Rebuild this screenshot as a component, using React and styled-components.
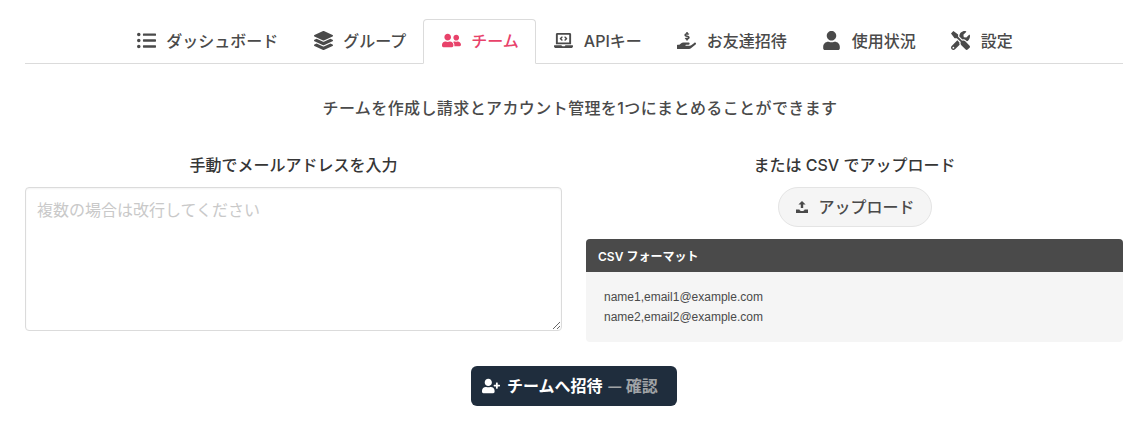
import React from "react";
import styled, { createGlobalStyle } from "styled-components";
import {
  FaListUl,
  FaLayerGroup,
  FaUserFriends,
  FaLaptopCode,
  FaHandHoldingUsd,
  FaUser,
  FaTools,
  FaUserPlus,
} from "react-icons/fa";

const mediumFont = `"Inter", "Noto Sans CJK JP", sans-serif`;

const GlobalStyle = createGlobalStyle`
  html, body {
    margin: 0;
    padding: 0;
    background: #fff;
    font-family: "Liberation Sans", "Noto Sans CJK JP", sans-serif;
    color: #4a4a4a;
  }
  * { box-sizing: border-box; }
`;

const Page = styled.div`
  width: 1145px;
  height: 427px;
  padding: 19px 22px 0 25px;
  overflow: hidden;
`;

const Tabs = styled.ul`
  display: flex;
  justify-content: center;
  height: 45px;
  margin: 0;
  padding: 0;
  list-style: none;
  border-bottom: 1px solid #dbdbdb;
`;

const Tab = styled.li`
  display: flex;
  align-items: center;
  height: 45px;
  padding: 0 16px 3px 17px;
  font-family: ${mediumFont};
  font-size: 16px;
  font-weight: 500;
  color: ${props => (props.$active ? "#e8426a" : "#4a4a4a")};
  background: ${props => (props.$active ? "#fff" : "transparent")};
  border: 1px solid ${props => (props.$active ? "#dbdbdb" : "transparent")};
  border-bottom-color: ${props => (props.$active ? "#fff" : "transparent")};
  border-radius: 4px 4px 0 0;
  white-space: nowrap;
`;

const TabIcon = styled.span`
  display: inline-flex;
  justify-content: center;
  width: 20px;
  margin: 1px 10px 0 0;
  font-size: 19px;
`;

const Lead = styled.p`
  margin: 34px 0 0;
  padding-left: 12px;
  font-family: ${mediumFont};
  font-size: 16px;
  font-weight: 500;
  letter-spacing: 0.4px;
  line-height: 20px;
  text-align: center;
`;

const Columns = styled.div`
  display: grid;
  grid-template-columns: 537px 537px;
  justify-content: space-between;
  margin-top: 37px;
`;

const Column = styled.div`
  display: flex;
  flex-direction: column;
`;

const Heading = styled.h3`
  margin: 0 0 12px;
  font-family: ${mediumFont};
  font-size: 16px;
  font-weight: 500;
  line-height: 20px;
  text-align: center;
  color: #363636;
`;

const Textarea = styled.textarea`
  display: block;
  width: 537px;
  height: 144px;
  padding: 11px;
  font-family: inherit;
  font-size: 16px;
  line-height: 24px;
  color: #363636;
  background: #fff;
  border: 1px solid #dbdbdb;
  border-radius: 4px;
  box-shadow: inset 0 1px 2px rgba(10, 10, 10, 0.05);
  outline: none;
  &::placeholder {
    color: #c9c9c9;
  }
`;

const UploadButton = styled.button`
  display: flex;
  align-items: center;
  align-self: center;
  width: 154px;
  height: 40px;
  padding: 0 16px 3px;
  font-family: ${mediumFont};
  font-size: 16px;
  font-weight: 500;
  color: #4a4a4a;
  white-space: nowrap;
  background: #f5f5f5;
  border: 1px solid #e4e4e4;
  border-radius: 20px;
`;

const UploadIcon = styled.svg`
  width: 14px;
  height: 14px;
  margin: 3px 10px 0 0;
  flex-shrink: 0;
`;

const Message = styled.article`
  margin-top: 12px;
  font-size: 12px;
  border-radius: 4px;
  background: #f5f5f5;
`;

const MessageHeader = styled.div`
  display: flex;
  align-items: center;
  height: 33px;
  padding: 0 12px 1px;
  font-family: ${mediumFont};
  font-weight: 600;
  color: #fff;
  background: #4a4a4a;
  border-radius: 4px 4px 0 0;
`;

const MessageBody = styled.div`
  padding: 15px 18px;
  line-height: 20px;
  color: #4a4a4a;
`;

const Actions = styled.div`
  display: flex;
  justify-content: center;
  margin-top: 24px;
`;

const SubmitButton = styled.button`
  display: flex;
  align-items: center;
  width: 206px;
  height: 40px;
  padding: 0 11px 3px;
  font-family: ${mediumFont};
  font-size: 16px;
  font-weight: 600;
  color: #fff;
  white-space: nowrap;
  background: #1f2d3d;
  border: none;
  border-radius: 6px;
`;

const SubmitIcon = styled.span`
  display: inline-flex;
  margin: 3px 7px 0 0;
  font-size: 18px;
`;

const Confirm = styled.span`
  margin-left: 5px;
  font-family: "Noto Sans CJK JP", sans-serif;
  color: #a0a3a6;
`;

const tabs = [
  { label: "ダッシュボード", icon: <FaListUl /> },
  { label: "グループ", icon: <FaLayerGroup /> },
  { label: "チーム", icon: <FaUserFriends />, active: true },
  { label: "APIキー", icon: <FaLaptopCode /> },
  { label: "お友達招待", icon: <FaHandHoldingUsd /> },
  { label: "使用状況", icon: <FaUser /> },
  { label: "設定", icon: <FaTools /> },
];

export default function App() {
  return (
    <Page>
      <GlobalStyle />
      <Tabs>
        {tabs.map(tab => (
          <Tab key={tab.label} $active={tab.active}>
            <TabIcon>{tab.icon}</TabIcon>
            {tab.label}
          </Tab>
        ))}
      </Tabs>
      <Lead>チームを作成し請求とアカウント管理を1つにまとめることができます</Lead>
      <Columns>
        <Column>
          <Heading>手動でメールアドレスを入力</Heading>
          <Textarea placeholder="複数の場合は改行してください" />
        </Column>
        <Column>
          <Heading>または CSV でアップロード</Heading>
          <UploadButton>
            <UploadIcon viewBox="0 0 14 14" fill="currentColor">
              <path d="M7 1 3.4 4.6h2.4V8h2.4V4.6h2.4z" />
              <path d="M1 9.5h3.4c.3 1 1.4 1.6 2.6 1.6s2.3-.6 2.6-1.6H13V13H1z" />
            </UploadIcon>
            アップロード
          </UploadButton>
          <Message>
            <MessageHeader>CSV フォーマット</MessageHeader>
            <MessageBody>
              name1,email1@example.com
              <br />
              name2,email2@example.com
            </MessageBody>
          </Message>
        </Column>
      </Columns>
      <Actions>
        <SubmitButton>
          <SubmitIcon>
            <FaUserPlus />
          </SubmitIcon>
          チームへ招待
          <Confirm>— 確認</Confirm>
        </SubmitButton>
      </Actions>
    </Page>
  );
}
